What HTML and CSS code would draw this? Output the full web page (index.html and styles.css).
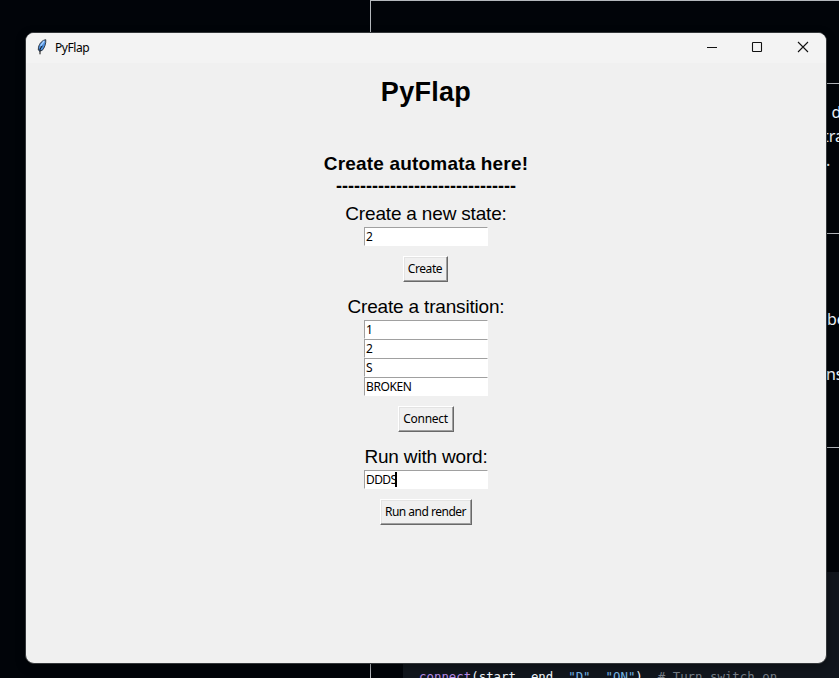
FILE: index.html
```html
<!DOCTYPE html>
<html lang="en">
<head>
<meta charset="utf-8">
<title>PyFlap</title>
<link rel="stylesheet" href="styles.css">
</head>
<body>
<div class="desktop">
  <div class="page">
    <section class="cell intro"></section>
    <section class="cell about"><p>. d</p><p>tra</p><p class="stop">.</p></section>
    <section class="cell notes"><p class="first">be</p><p>ans</p></section>
    <section class="cell example">
      <pre class="code"><span class="fn">connect</span>(start, end, <span class="str">"D"</span>, <span class="str">"ON"</span>)  <span class="rem"># Turn switch on</span></pre>
    </section>
  </div>
  <main class="window">
    <header class="titlebar">
      <svg class="feather" width="10" height="16" viewBox="0 0 10 16">
        <path d="M8.800 .7C5.500 1 2.400 4.400 1.500 8.200L1.300 11l1.200 1.100 2.700-.7C7.600 8.700 9.100 4.600 8.800.7Z" fill="#4f91df" stroke="#252b35" stroke-width=".9"/>
        <path d="M7.200 2 3.600 6.800" stroke="#a9d1ff" stroke-width="1.300"/>
        <path d="M5.300 6.800 3 10V15.300" fill="none" stroke="#0a0a0a" stroke-width="1"/>
      </svg>
      <span class="caption">PyFlap</span>
      <div class="controls">
        <svg width="12" height="12" viewBox="0 0 12 12"><path d="M1 6.500H11"/></svg>
        <svg width="12" height="12" viewBox="0 0 12 12"><rect x="1.500" y="1.500" width="9" height="9" rx=".6"/></svg>
        <svg width="12" height="12" viewBox="0 0 12 12"><path d="M1 1 11 11M11 1 1 11"/></svg>
      </div>
    </header>
    <div class="content">
      <h1>PyFlap</h1>
      <h2>Create automata here!</h2>
      <div class="rule">------------------------------</div>
      <div class="label state">Create a new state:</div>
      <div class="entry">2</div>
      <button class="create">Create</button>
      <div class="label">Create a transition:</div>
      <div class="entry">1</div>
      <div class="entry">2</div>
      <div class="entry">S</div>
      <div class="entry broken">BROKEN</div>
      <button class="connect">Connect</button>
      <div class="label">Run with word:</div>
      <div class="entry typed">DDDS<i class="caret"></i></div>
      <button class="run">Run and render</button>
    </div>
  </main>
</div>
</body>
</html>
```
FILE: styles.css
```css
* { box-sizing: border-box; }
body, h1, h2, p, pre { margin: 0; }
body { background: #010409; overflow: hidden; }
.desktop { position: relative; width: 839px; height: 678px; overflow: hidden; }

.page {
  display: flex;
  flex-direction: column;
  width: 469px;
  height: 678px;
  margin-left: 370px;
  border-left: 1px solid #b4b8bd;
  color: #f0f6fc;
  font: 16px/24px "Noto Sans", sans-serif;
}
.cell { flex: none; border-top: 1px solid #b4b8bd; padding-left: 452px; white-space: nowrap; overflow: hidden; }
.intro { height: 83px; }
.about { height: 150px; padding: 16px 0 0 452px; }
.about .stop { padding-left: 3px; }
.notes { height: 214px; padding-top: 73px; }
.notes .first { padding-left: 4px; margin-bottom: 31px; }
.notes p:last-child { margin-left: -6px; }
.example { height: 231px; padding: 124px 0 0 32px; }
.code {
  height: 110px;
  padding: 95px 0 0 16px;
  background: #11161d;
  font: 12.4px/20px "DejaVu Sans Mono", monospace;
}
.fn { color: #b98be8; }
.str { color: #79b8e8; }
.rem { color: #777e87; }

.window {
  position: absolute;
  left: 25px;
  top: 32px;
  width: 802px;
  height: 632px;
  border: 1px solid #34373a;
  border-radius: 9px;
  background: #f0f0f0;
  overflow: hidden;
  color: #000;
  box-shadow: 0 3px 10px rgba(0, 0, 0, .35);
  font: 12px/16px "Noto Sans", sans-serif;
}
.titlebar { display: flex; height: 30px; background: #f3f3f3; padding-left: 11px; }
.feather { margin-top: 6px; }
.caption { margin: 7px 0 0 8px; letter-spacing: -.45px; }
.controls { display: flex; gap: 33.5px; margin: 8px 17px 0 auto; }
.controls svg { fill: none; stroke: #111; stroke-width: 1.1; }
.controls svg:nth-child(2) { margin: 0 .5px 0 -.5px; }

.content { display: flex; flex-direction: column; align-items: center; }
h1 { margin-top: 12px; font: bold 27px/34px "Liberation Sans", sans-serif; letter-spacing: .3px; }
h2 { margin-top: 44px; font: bold 19px/22px "Liberation Sans", sans-serif; letter-spacing: .18px; }
.rule { font: bold 18px/22px "Liberation Sans", sans-serif; }
.label {
  height: 26px;
  margin: 12px 0 0;
  font: 19px/26px "Liberation Sans", sans-serif;
  letter-spacing: -.18px;
}
.label.state { height: 26px; margin-top: 4px; }
.entry {
  display: flex;
  width: 124px;
  height: 19px;
  padding-left: 1px;
  border: 1px solid #fff;
  border-top-color: #a0a0a0;
  border-left-color: #a0a0a0;
  background: #fff;
  line-height: 18px;
}
.broken { letter-spacing: -.4px; }
.typed { letter-spacing: -.6px; }
.caret { width: 2px; height: 15px; margin: 1px 0 0 -1px; background: #000; }
button {
  height: 26px;
  margin-top: 10px;
  padding: 0 1px 0 0;
  border: 1px solid;
  border-color: #fff #696969 #696969 #fff;
  box-shadow: inset -1px -1px #a0a0a0, inset 1px 1px #e3e3e3;
  background: #f0f0f0;
  color: #000;
  font: inherit;
  white-space: nowrap;
}
.create { width: 45px; margin-right: 1px; letter-spacing: -.4px; }
.connect { width: 56px; letter-spacing: -.3px; }
.run { width: 92px; letter-spacing: -.5px; }
```
